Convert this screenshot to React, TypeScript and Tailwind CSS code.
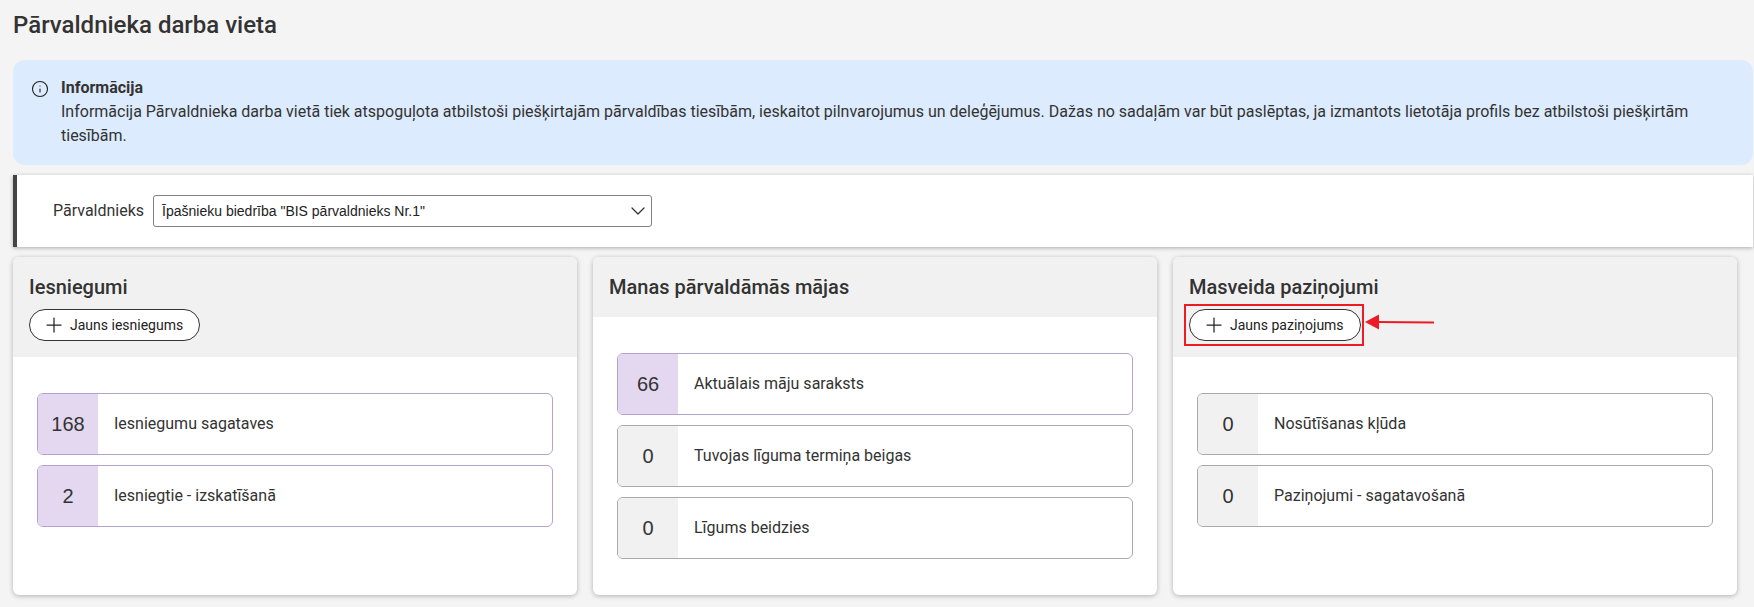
import { Plus, ChevronDown, Info } from "lucide-react";

function Row({ n, label, active }: { n: string; label: string; active?: boolean }) {
  return (
    <div className={active ? "flex h-[62px] overflow-hidden rounded-[6px] border border-[#b5a2cc] bg-white" : "flex h-[62px] overflow-hidden rounded-[6px] border border-[#a9a9a9] bg-white"}>
      <div className={active ? "flex w-[60px] items-center justify-center bg-[#e3d8ef] font-['Liberation_Sans',sans-serif] text-[20px] text-[#333]" : "flex w-[60px] items-center justify-center bg-[#f1f1f1] font-['Liberation_Sans',sans-serif] text-[20px] text-[#333]"}>{n}</div>
      <div className="flex items-center pl-[16px] text-[16px] text-[#333]">{label}</div>
    </div>
  );
}

function NewButton({ label }: { label: string }) {
  return (
    <button className="flex h-[32px] items-center rounded-full border border-[#333] bg-white pl-[12px] pr-[16px] text-[14px] text-[#222]">
      <Plus size={24} strokeWidth={1.25} className="mr-[4px]" />
      {label}
    </button>
  );
}

function Card({ title, action, children }: { title: string; action?: React.ReactNode; children: React.ReactNode }) {
  return (
    <div className="h-[338px] w-[564px] overflow-hidden rounded-[6px] bg-white shadow-[0_1px_5px_rgba(0,0,0,0.28)]">
      <div className={action ? "relative h-[100px] bg-[#f1f1f1] px-[16px] pt-[17px]" : "relative h-[60px] bg-[#f1f1f1] px-[16px] pt-[17px]"}>
        <h2 className="text-[20px] font-medium leading-[26px] text-[#333]">{title}</h2>
        {action ? <div className="mt-[9px]">{action}</div> : null}
      </div>
      <div className="flex flex-col gap-[10px] px-[24px] pt-[36px]">{children}</div>
    </div>
  );
}

export default function App() {
  return (
    <div className="h-[607px] overflow-hidden bg-[#f4f4f4] pl-[13px] pr-[1px] font-['Roboto',sans-serif] text-[#333]">
      <h1 className="pt-[10px] text-[24px] font-medium leading-[30px] text-[#333]">Pārvaldnieka darba vieta</h1>
      <div className="mt-[20px] flex h-[105px] rounded-[12px] bg-[#dcebfd] pl-[18px] pr-[40px] pt-[16px]">
        <Info size={18} strokeWidth={1.5} className="mr-[12px] mt-[4px] shrink-0 text-[#222]" />
        <div className="text-[16px] leading-[24px] text-[#333]">
          <div className="font-bold">Informācija</div>
          <div>Informācija Pārvaldnieka darba vietā tiek atspoguļota atbilstoši piešķirtajām pārvaldības tiesībām, ieskaitot pilnvarojumus un deleģējumus. Dažas no sadaļām var būt paslēptas, ja izmantots lietotāja profils bez atbilstoši piešķirtām tiesībām.</div>
        </div>
      </div>
      <div className="mt-[10px] flex h-[72px] items-center border-l-[4px] border-[#444] bg-white pl-[36px] shadow-[0_1px_4px_rgba(0,0,0,0.3)]">
        <span className="mr-[9px] text-[16px] text-[#333]">Pārvaldnieks</span>
        <div className="flex h-[32px] w-[499px] items-center justify-between rounded-[3px] border border-[#808080] bg-white pl-[8px] pr-[1px] font-['Liberation_Sans',sans-serif] text-[14px] text-[#222]">
          <span>Īpašnieku biedrība "BIS pārvaldnieks Nr.1"</span>
          <ChevronDown size={24} strokeWidth={1.25} className="text-[#333]" />
        </div>
      </div>
      <div className="mt-[10px] flex gap-[16px]">
        <Card title="Iesniegumi" action={<NewButton label="Jauns iesniegums" />}>
          <Row n="168" label="Iesniegumu sagataves" active />
          <Row n="2" label="Iesniegtie - izskatīšanā" active />
        </Card>
        <Card title="Manas pārvaldāmās mājas">
          <Row n="66" label="Aktuālais māju saraksts" active />
          <Row n="0" label="Tuvojas līguma termiņa beigas" />
          <Row n="0" label="Līgums beidzies" />
        </Card>
        <Card
          title="Masveida paziņojumi"
          action={
            <div className="relative w-fit">
              <NewButton label="Jauns paziņojums" />
              <div className="absolute left-[-5px] top-[-5px] h-[42px] w-[180px] border-[2px] border-[#ed1c24]" />
              <svg className="absolute left-[176px] top-[4px]" width="72" height="18" viewBox="0 0 72 18">
                <path d="M0 9 L14 1.5 L14 16.5 Z" fill="#ed1c24" />
                <path d="M12 9 L69 9.5" stroke="#ed1c24" strokeWidth="2" fill="none" />
              </svg>
            </div>
          }
        >
          <Row n="0" label="Nosūtīšanas kļūda" />
          <Row n="0" label="Paziņojumi - sagatavošanā" />
        </Card>
      </div>
    </div>
  );
}
